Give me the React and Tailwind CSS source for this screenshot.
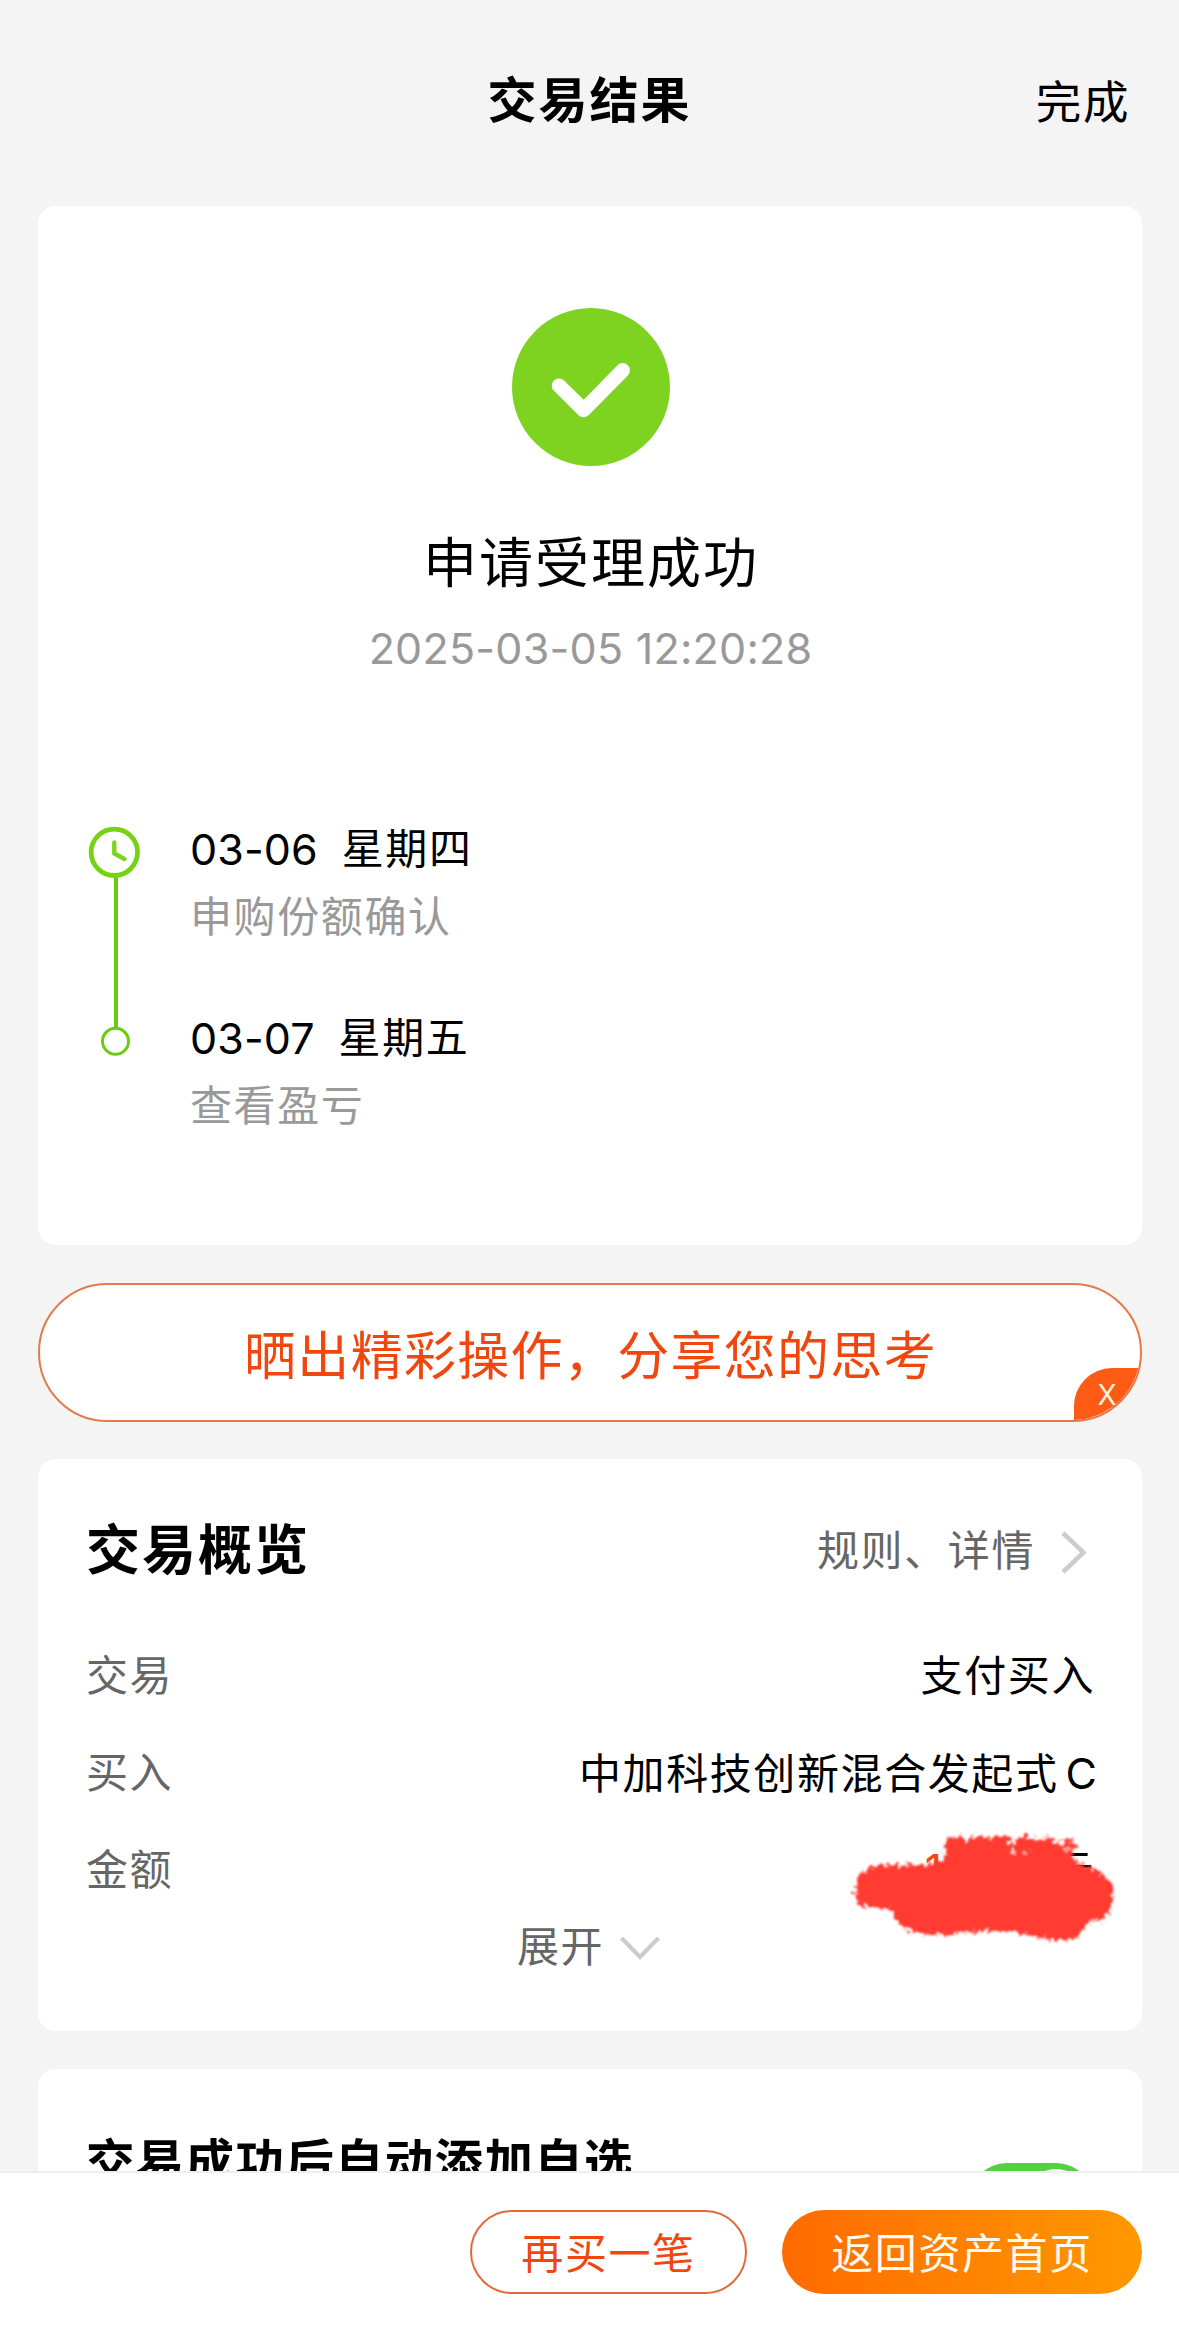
const timeline = [
  { date: "03-06", day: "星期四", label: "申购份额确认" },
  { date: "03-07", day: "星期五", label: "查看盈亏" },
];

const CheckBadge = () => (
  <svg className="ml-px size-[158px]" viewBox="0 0 158 158" fill="none">
    <circle cx="79" cy="79" r="79" fill="#7ed321" />
    <path
      d="M47 77.7 71.7 102 110.7 62.3"
      stroke="#fff"
      strokeWidth="14.5"
      strokeLinecap="round"
      strokeLinejoin="round"
    />
  </svg>
);

const TimelineRail = () => (
  <svg className="w-[52px] h-[230px]" viewBox="0 0 52 230" fill="none">
    <path d="M28 50V202" stroke="#6acb10" strokeWidth="4" />
    <circle cx="26.3" cy="26.3" r="23.2" stroke="#76d313" strokeWidth="4.8" />
    <path
      d="M26.3 16.5V27.5L36.5 33"
      stroke="#7ed321"
      strokeWidth="4.4"
      strokeLinecap="round"
      strokeLinejoin="round"
    />
    <circle cx="27.5" cy="215.3" r="13" fill="#fff" stroke="#6acb10" strokeWidth="3" />
  </svg>
);

// Brush stroke that hides the amount
const Scribble = () => (
  <svg
    className="absolute -right-[44px] -top-[23px] w-[300px] h-[140px]"
    viewBox="840 1816 300 140"
  >
    <defs>
      <filter id="rough" x="-10%" y="-10%" width="120%" height="120%">
        <feTurbulence type="fractalNoise" baseFrequency="0.2" numOctaves="3" seed="7" />
        <feDisplacementMap in="SourceGraphic" scale="14" xChannelSelector="R" yChannelSelector="G" />
        <feGaussianBlur stdDeviation="0.9" />
      </filter>
    </defs>
    <g filter="url(#rough)" fill="#ff3b30">
      <path d="M856 1892 858 1876 868 1868 882 1863 900 1865 915 1864 930 1863 945 1860 946 1848 949 1836 965 1838 980 1835 995 1837 1008 1834 1013 1846 1019 1837 1032 1836 1044 1840 1048 1833 1056 1841 1067 1837 1079 1843 1072 1851 1076 1861 1092 1867 1108 1875 1114 1887 1113 1902 1107 1915 1102 1921 1090 1921 1082 1931 1075 1939 1054 1939 1035 1936 1018 1931 998 1931 980 1930 960 1932 940 1934 920 1933 906 1928 897 1918 891 1907 874 1907 860 1904Z" />
    </g>
    <g fill="#fff" filter="url(#rough)">
      <circle cx="1015" cy="1849" r="2.5" />
      <circle cx="1027" cy="1852" r="1.6" />
      <circle cx="1063" cy="1841" r="3" />
      <circle cx="1068" cy="1849" r="2" />
      <circle cx="1096" cy="1919" r="2" />
    </g>
  </svg>
);

const Row = ({ label, children }) => (
  <div className="flex justify-between h-[97px] leading-[60px]">
    <span className="text-[#666]">{label}</span>
    <div className="relative text-black">{children}</div>
  </div>
);

const App = () => {
  return (
    <div className="w-[1179px] h-[2329px] overflow-hidden flex flex-col bg-[#f4f4f4] text-black text-[42px] tracking-[1.6px] font-['Inter','Noto_Sans_CJK_SC',sans-serif]">
      {/* Header */}
      <header className="h-[206px] shrink-0 grid grid-cols-3 items-center px-[49px] pb-[4px]">
        <span />
        <h1 className="text-center text-[49px] font-bold tracking-[2px]">交易结果</h1>
        <button className="justify-self-end pt-[5px] text-[45.5px] tracking-[1.6px]">完成</button>
      </header>

      <main className="flex-1 min-h-0 overflow-hidden pl-[38px] pr-[37px] flex flex-col">
        {/* Result */}
        <section className="h-[1039px] shrink-0 rounded-[18px] bg-white pt-[102px]">
          <div className="flex flex-col items-center">
            <CheckBadge />
            <h2 className="mt-[58px] ml-[2px] text-[54px] leading-[80px] tracking-[2px]">申请受理成功</h2>
            <p className="mt-[14px] ml-px text-[43px] leading-[60px] tracking-[0.25px] text-[#999]">
              2025-03-05 12:20:28
            </p>
          </div>

          <div className="mt-[148px] pl-[50px] flex gap-[50px]">
            <TimelineRail />
            <ul>
              {timeline.map((item) => (
                <li key={item.date} className="h-[189px]">
                  <p className="flex h-[68px] leading-[46px] whitespace-nowrap">
                    <span className="text-[43px] tracking-[0.1px]">{item.date}</span>
                    <span className="ml-[24px]">{item.day}</span>
                  </p>
                  <p className="leading-[46px] text-[#999]">{item.label}</p>
                </li>
              ))}
            </ul>
          </div>
        </section>

        {/* Share banner */}
        <div className="relative mt-[38px] h-[139px] shrink-0 rounded-full overflow-hidden border-2 border-[#e47a4c] bg-white flex items-center justify-center">
          <span className="ml-px text-[52px] tracking-[1.3px] pt-[9px] text-[#f1470f]">
            晒出精彩操作，分享您的思考
          </span>
          <button className="absolute -right-[2px] -bottom-[2px] w-[68px] h-[54px] rounded-tl-[38px] bg-[#fb5b14] pr-[2px] text-center text-[28px] leading-[53px] tracking-normal text-[#fff3e0]">
            X
          </button>
        </div>

        {/* Overview */}
        <section className="mt-[37px] h-[572px] shrink-0 rounded-[18px] bg-white pl-[48px] pr-[47px] pt-[51px]">
          <div className="flex items-center justify-between h-[80px]">
            <h3 className="text-[54px] font-bold tracking-[2px]">交易概览</h3>
            <button className="flex items-center text-[#666]">
              规则、详情
              <svg className="ml-[26px] mr-[8px] mt-[4px] w-[26px] h-[44px]" viewBox="0 0 26 44" fill="none">
                <path d="M2 3 22.5 22.5 2 42" stroke="#ccc" strokeWidth="4.5" />
              </svg>
            </button>
          </div>

          <div className="mt-[56px]">
            <Row label="交易">支付买入</Row>
            <Row label="买入">
              中加科技创新混合发起式<span className="ml-[7px] text-[43px] tracking-[-2px]">C</span>
            </Row>
            <Row label="金额">
              <div className="flex">
                <span className="mr-[108px] text-[#f1470f]">1</span>
                <span>元</span>
              </div>
              <Scribble />
            </Row>
          </div>

          <button className="-mt-[22px] mx-auto flex items-center leading-[64px] text-[#666]">
            展开
            <svg className="ml-[15px] mr-[3px] mt-[2px] w-[42px] h-[26px]" viewBox="0 0 42 26" fill="none">
              <path d="M2.5 3 21 22 39.5 3" stroke="#ccc" strokeWidth="4.2" />
            </svg>
          </button>
        </section>

        {/* Auto add to watchlist */}
        <section className="mt-[38px] h-[220px] shrink-0 rounded-[18px] bg-white px-[48px] pt-[59px] flex items-start justify-between">
          <h3 className="text-[48.5px] leading-[70px] font-bold tracking-[1.3px]">交易成功后自动添加自选</h3>
          <span className="mt-[35px] w-[125px] h-[76px] rounded-full bg-[#53d140] flex items-center justify-end px-[6px]">
            <span className="size-[64px] rounded-full bg-white" />
          </span>
        </section>
      </main>

      {/* Footer */}
      <footer className="h-[158px] shrink-0 border-t-2 border-[#eee] bg-white pl-[38px] pr-[37px] pt-[37px] flex justify-end gap-[35px]">
        <button className="w-[277px] h-[84px] rounded-full border-2 border-[#e4693a] text-[#f1470f] pt-[3px]">
          再买一笔
        </button>
        <button className="w-[360px] h-[84px] rounded-full bg-linear-to-r from-[#ff6a00] to-[#ff9800] text-[#fffaf0] pt-[3px]">
          返回资产首页
        </button>
      </footer>
    </div>
  );
};

export default App;
